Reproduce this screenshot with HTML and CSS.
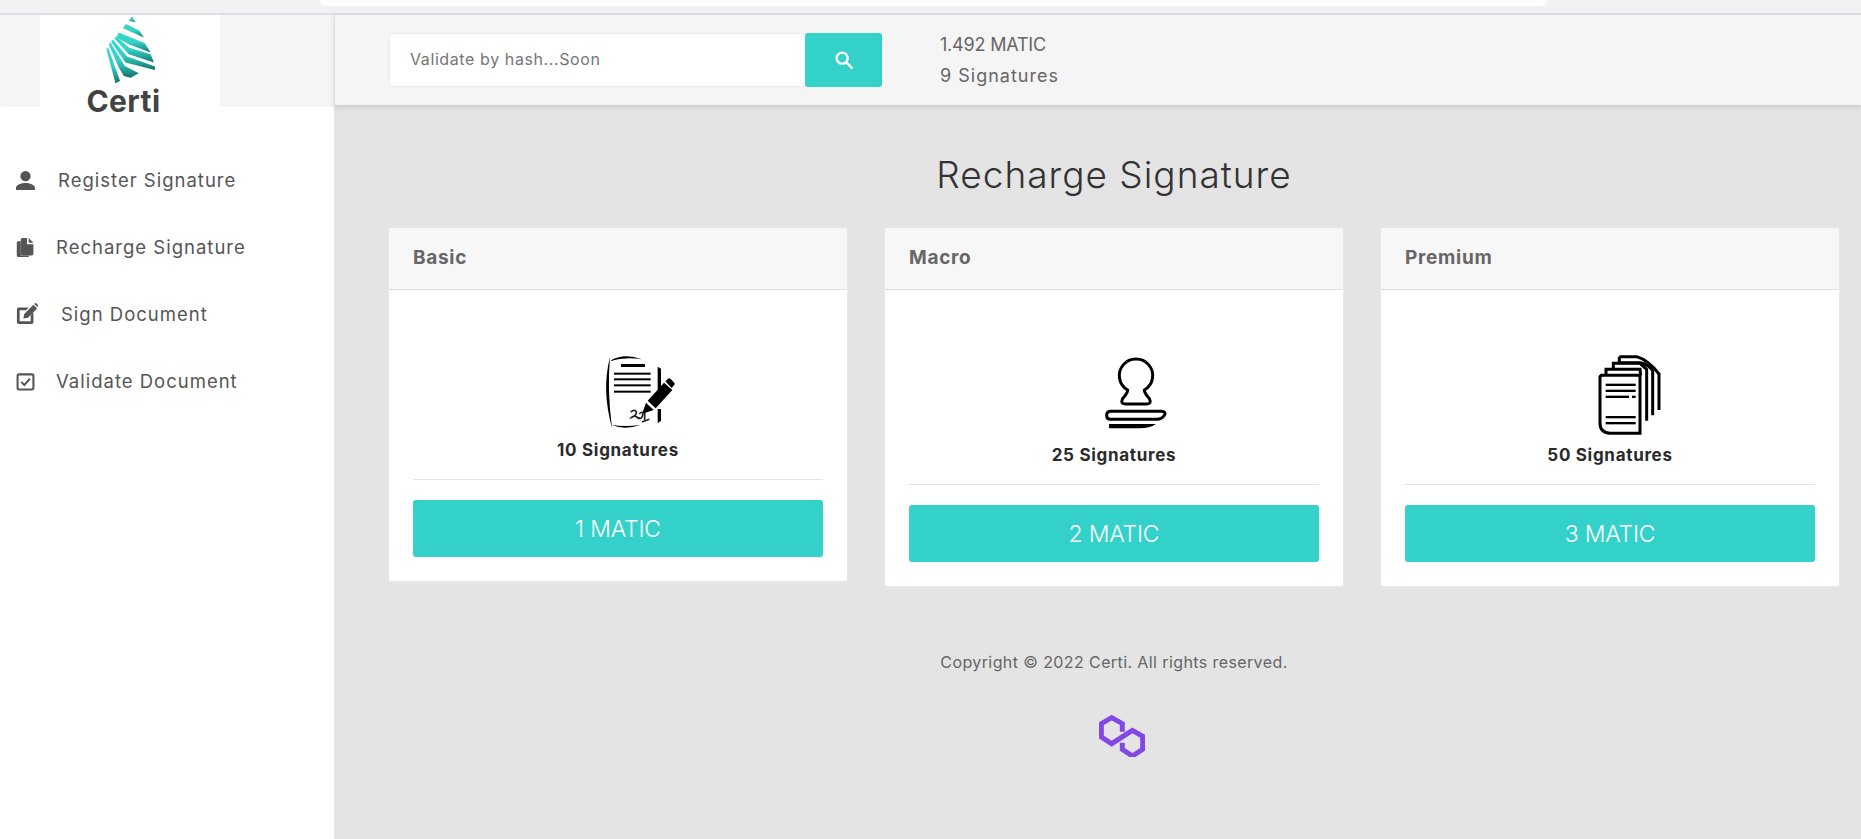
FILE: index.html
```html
<!DOCTYPE html>
<html lang="en">
<head>
<meta charset="utf-8">
<title>Certi</title>
<link rel="stylesheet" href="styles.css">
</head>
<body>
<div class="strip"><div class="strip-box"></div></div>
<div class="shell">
  <aside class="sidebar">
    <div class="brand-bar">
      <div class="logo">
        <svg class="logo-mark" viewBox="20 5 170 215" width="57" height="72">
          <defs>
            <linearGradient id="lg" x1="0" y1="0" x2="0" y2="1">
              <stop offset="0" stop-color="#35d8cc"/>
              <stop offset=".5" stop-color="#35d2c6"/>
              <stop offset=".75" stop-color="#25a69c"/>
              <stop offset="1" stop-color="#136f68"/>
            </linearGradient>
          </defs>
          <g fill="url(#lg)">
            <polygon points="110,12 120,30 100,25"/>
            <polygon points="92,35 132,55 145,75 82,47"/>
            <polygon points="70,60 148,92 165,120 100,95 62,75"/>
            <polygon points="57,78 62,72 100,105 165,125 175,150 100,125"/>
            <polygon points="47,88 53,82 95,132 178,162 178,172 90,150"/>
            <polygon points="40,95 45,90 88,160 130,182 105,195 85,190 70,165"/>
            <polygon points="33,110 38,105 74,205 60,212"/>
          </g>
        </svg>
        <span class="logo-name">Certi</span>
      </div>
    </div>
    <nav class="nav">
      <a class="nav-item gap-a">
        <svg class="nav-icon" viewBox="0 0 24 24"><path d="M12 13a6.500 6.500 0 1 0 0-13 6.500 6.500 0 0 0 0 13zm0 2c-5 0-12 2.500-12 6v3h24v-3c0-3.500-7-6-12-6z"/></svg>
        <span>Register Signature</span>
      </a>
      <a class="nav-item gap-b">
        <svg class="nav-icon" viewBox="0 0 24 24"><path d="M6 4H3a2 2 0 0 0-2 2v16a2 2 0 0 0 2 2h13v-2H6z"/><path d="M14 0H8a2 2 0 0 0-2 2v18a2 2 0 0 0 2 2h12a2 2 0 0 0 2-2V8h-8z"/><path d="M16 0v6h6z"/></svg>
        <span>Recharge Signature</span>
      </a>
      <a class="nav-item gap-c">
        <svg class="nav-icon nav-icon-wide" viewBox="0 0 24 24"><path d="M3 5h11l-3 3H4v12h12v-7l3-3v11a2 2 0 0 1-2 2H3a2 2 0 0 1-2-2V7a2 2 0 0 1 2-2z"/><path d="M8 17l1-5L19 2l4 4L13 16z"/><path d="M20 1l.700-.700a1 1 0 0 1 1.300 0l2 2a1 1 0 0 1 0 1.300l-.700.700z"/></svg>
        <span>Sign Document</span>
      </a>
      <a class="nav-item gap-b">
        <svg class="nav-icon nav-icon-check" viewBox="0 0 24 24"><rect x="2" y="3" width="20" height="19" rx="2" fill="none" stroke="#555" stroke-width="2.600"/><path d="M6.500 12.500l4 4 7-8" fill="none" stroke="#555" stroke-width="2.600"/></svg>
        <span>Validate Document</span>
      </a>
    </nav>
  </aside>
  <div class="main">
    <header class="topbar">
      <form class="search">
        <div class="search-input">Validate by hash...Soon</div>
        <div class="search-btn">
          <svg viewBox="0 0 24 24" width="22" height="22"><circle cx="10" cy="10" r="6" fill="none" stroke="#fff" stroke-width="2.600"/><path d="M14.500 14.500L20.500 20.500" stroke="#fff" stroke-width="2.800" stroke-linecap="round"/></svg>
        </div>
      </form>
      <div class="balance">
        <div class="balance-matic">1.492 MATIC</div>
        <div class="balance-sigs">9 Signatures</div>
      </div>
    </header>
    <main class="content">
      <h1 class="title">Recharge Signature</h1>
      <div class="plans">
        <section class="card">
          <div class="card-head">Basic</div>
          <div class="card-body">
            <svg class="art art-short" viewBox="-36 -78 420 372">
              <path d="M150 63Q190 38 246 58Q195 50 150 63Z"/>
              <path d="M150 52Q124 150 156 264Q141 150 150 52Z"/>
              <path d="M154 254Q195 272 242 254Q195 262 154 254Z"/>
              <rect x="183" y="72" width="72" height="9"/>
              <rect x="162" y="98" width="110" height="6"/>
              <rect x="162" y="115" width="110" height="6"/>
              <rect x="162" y="133" width="110" height="6"/>
              <rect x="162" y="152" width="110" height="6"/>
              <path d="M293 80L303 86V162H293Z"/>
              <path d="M293 207H303V242L293 250Z"/>
              <path d="M263 182L312 128L337 150L287 205Z"/>
              <path d="M258 188L281 210L246 222Z"/>
              <path d="M316 124L324 116Q328 113 332 117L343 128Q346 132 342 136L335 144Z"/>
              <path class="scribble" d="M212 216Q226 206 229 217Q229 228 215 232Q224 222 237 237M238 222Q250 210 248 226Q244 240 235 232M254 216V240M246 246L268 238"/>
            </svg>
            <p class="qty">10 Signatures</p>
            <hr class="rule">
            <a class="buy">1 MATIC</a>
          </div>
        </section>
        <section class="card">
          <div class="card-head">Macro</div>
          <div class="card-body">
            <svg class="art art-tall" viewBox="-18 -78 420 387">
              <g class="outline">
                <path d="M233 150A50 50 0 1 1 283 150C283 160 292 168 298 176Q306 192 290 192H226Q210 192 218 176C224 168 233 160 233 150Z"/>
                <path d="M182 214H334Q350 214 343 226Q336 238 320 238H182Q170 238 170 226Q170 214 182 214Z"/>
              </g>
              <path d="M177 252H318Q298 265 270 265H177Z"/>
            </svg>
            <p class="qty">25 Signatures</p>
            <hr class="rule">
            <a class="buy">2 MATIC</a>
          </div>
        </section>
        <section class="card">
          <div class="card-head">Premium</div>
          <div class="card-body">
            <svg class="art art-tall" viewBox="0 -78 420 387">
              <g class="outline">
                <path d="M238 50H290Q325 60 357 102V210"/>
                <path d="M238 50V68H300Q325 72 338 92V226"/>
                <path d="M220 88V70H300L320 88V242"/>
                <path d="M198 106V88H300L302 106"/>
                <path d="M184 106H300V280H210Q180 278 180 250V110Z"/>
              </g>
              <rect x="197" y="131" width="90" height="7"/>
              <rect x="197" y="149" width="90" height="7"/>
              <rect x="197" y="167" width="70" height="7"/>
              <rect x="276" y="167" width="11" height="7"/>
              <rect x="197" y="228" width="90" height="7"/>
              <rect x="197" y="246" width="90" height="7"/>
            </svg>
            <p class="qty">50 Signatures</p>
            <hr class="rule">
            <a class="buy">3 MATIC</a>
          </div>
        </section>
      </div>
      <footer class="footer">
        <p class="copy">Copyright © 2022 Certi. All rights reserved.</p>
        <svg class="polygon" viewBox="55 42 138 126" width="46" height="42">
          <path d="M125 92V68L93 50L62 68V108L93 128L155 88L186 106V145L155 165L125 145V125" fill="none" stroke="#8247e5" stroke-width="15"/>
        </svg>
      </footer>
    </main>
  </div>
</div>
</body>
</html>
```

FILE: styles.css
```css
* { box-sizing: border-box; }
html, body { margin: 0; height: 100%; }
body {
  font-family: Inter, "Noto Sans", sans-serif;
  color: #555;
  background: #e4e4e4;
  overflow: hidden;
}
.strip {
  height: 15px;
  background: #f2f2f2;
  border-bottom: 2px solid #dcdfe3;
  padding-left: 320px;
}
.strip-box {
  width: 1227px;
  height: 6px;
  background: #fff;
  border-radius: 0 0 6px 6px;
}
.shell {
  display: grid;
  grid-template-columns: 334px 1fr;
  height: 824px;
}
.sidebar { background: #fff; }
.brand-bar {
  height: 90px;
  background: #f5f5f5;
  box-shadow: 0 1px 2px rgba(0,0,0,.08);
}
.logo {
  position: relative;
  width: 180px;
  height: 100px;
  margin-left: 40px;
  background: #fff;
  display: flex;
  flex-direction: column;
  align-items: center;
}
.logo-mark { display: block; margin-top: -1px; flex: none; }
.logo-name {
  font-size: 30px;
  font-weight: 700;
  line-height: 32px;
  color: #424242;
  margin: -1px 0 0 -13px;
  letter-spacing: .4px;
}
.nav {
  display: flex;
  flex-direction: column;
  padding-top: 63px;
  gap: 43px;
}
.nav-item {
  display: flex;
  align-items: center;
  height: 24px;
  padding-left: 16px;
  font-size: 18.500px;
  letter-spacing: 1px;
  color: #555;
}
.gap-a { gap: 23px; }
.gap-b { gap: 21px; }
.gap-c { gap: 23px; }
.nav-icon { width: 19px; height: 19px; fill: #555; flex: none; }
.nav-icon-wide { width: 22px; height: 22px; }
.nav-icon-check { fill: none; }
.main { display: flex; flex-direction: column; min-width: 0; }
.topbar {
  height: 90px;
  flex: none;
  display: flex;
  align-items: center;
  padding-left: 54px;
  gap: 58px;
  background: #f5f5f5;
  border-left: 1px solid #dedede;
  box-shadow: 0 2px 5px rgba(0,0,0,.12);
}
.search {
  display: flex;
  width: 493px;
  height: 54px;
  margin: 0;
  border-radius: 3px;
  border: 1px solid #ececec;
  background: #fff;
}
.search-input {
  flex: 1;
  padding-left: 20px;
  font-size: 16px;
  letter-spacing: .6px;
  line-height: 50px;
  color: #757575;
}
.search-btn {
  width: 77px;
  margin: -1px;
  background: #33d1ca;
  border-radius: 3px;
  display: flex;
  align-items: center;
  justify-content: center;
}
.balance {
  font-size: 18px;
  line-height: 31px;
  color: #666;
}
.balance-matic { letter-spacing: -.2px; }
.balance-sigs { letter-spacing: 1px; }
.content { padding: 0 21px 0 54px; }
.title {
  margin: 0;
  padding-top: 46px;
  height: 122px;
  text-align: center;
  font-size: 37px;
  letter-spacing: 1px;
  line-height: 48px;
  font-weight: 300;
  color: #333;
}
.plans {
  display: grid;
  grid-template-columns: repeat(3, 460px);
  justify-content: space-between;
  align-items: start;
}
.card {
  background: #fff;
  border: 1px solid #e8e8e8;
  border-radius: 3px;
}
.card-head {
  height: 62px;
  padding: 0 24px;
  background: #f7f7f7;
  border-bottom: 1px solid #dedede;
  border-radius: 3px 3px 0 0;
  font-size: 19px;
  letter-spacing: .7px;
  font-weight: 700;
  line-height: 60px;
  color: #666;
}
.card-body { padding: 24px; }
.art { display: block; width: 140px; margin: 0 auto; fill: #000; }
.art-short { height: 124px; }
.art-tall { height: 129px; }
.scribble { fill: none; stroke: #222; stroke-width: 5; }
.outline { fill: none; stroke: #000; stroke-width: 9; }
.qty {
  margin: 0;
  text-align: center;
  font-size: 17px;
  letter-spacing: .7px;
  font-weight: 700;
  line-height: 24px;
  color: #2a2a2a;
}
.rule {
  margin: 17px 0 20px;
  border: 0;
  border-top: 1px solid #e3e3e3;
}
.buy {
  display: block;
  height: 57px;
  border-radius: 3px;
  background: #33d1ca;
  color: #fff;
  text-align: center;
  font-size: 23px;
  letter-spacing: -.2px;
  line-height: 58px;
  font-weight: 300;
}
.footer {
  display: flex;
  flex-direction: column;
  align-items: center;
}
.copy {
  margin: 63px 0 0;
  font-size: 16px;
  letter-spacing: .4px;
  line-height: 24px;
  color: #666;
}
.polygon { display: block; margin-top: 41px; margin-left: 16px; }
```
